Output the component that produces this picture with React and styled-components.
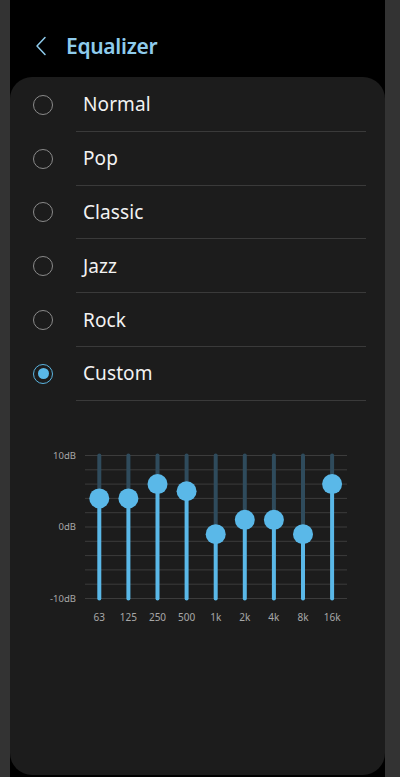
import React from 'react';
import styled, { createGlobalStyle } from 'styled-components';

const Global = createGlobalStyle`
  html, body {
    margin: 0;
    padding: 0;
    background: #333333;
  }
  body {
    font-family: "Noto Sans", "Open Sans", sans-serif;
  }
`;

const Frame = styled.div`
  width: 375px;
  height: 777px;
  margin-left: 10px;
  background: #000;
  display: flex;
  flex-direction: column;
  overflow: hidden;
`;

const Header = styled.div`
  height: 77px;
  display: flex;
  align-items: center;
  padding: 14px 0 0 22px;
  box-sizing: border-box;
  gap: 16px;
`;

const Back = styled.button`
  background: none;
  border: none;
  padding: 0;
  width: 18px;
  height: 22px;
  display: flex;
  align-items: center;
  justify-content: center;
`;

const Title = styled.h1`
  margin: 0;
  font-size: 21px;
  font-weight: 600;
  color: #8ecbec;
  letter-spacing: -0.3px;
`;

const Card = styled.div`
  flex: 1;
  margin-bottom: 2px;
  background: #1c1c1c;
  border-radius: 22px;
`;

const List = styled.div`
  display: flex;
  flex-direction: column;
  padding-top: 1px;
`;

const Row = styled.label`
  height: 53.8px;
  display: flex;
  align-items: center;
  padding-left: 23px;
  cursor: pointer;
`;

const Radio = styled.span`
  width: 20px;
  height: 20px;
  box-sizing: border-box;
  border-radius: 50%;
  border: 1.5px solid ${p => (p.$on ? '#5ab4e0' : '#8a8a8a')};
  display: flex;
  align-items: center;
  justify-content: center;
  flex-shrink: 0;
  &::after {
    content: '';
    width: 11px;
    height: 11px;
    border-radius: 50%;
    background: #5ab8e8;
    display: ${p => (p.$on ? 'block' : 'none')};
  }
`;

const RowBody = styled.div`
  margin-left: 23px;
  margin-right: 19px;
  align-self: stretch;
  flex: 1;
  display: flex;
  align-items: center;
  padding-left: 7px;
  border-bottom: 1px solid #3a3a3a;
  font-size: 19px;
  color: #f2f2f2;
  letter-spacing: 0.1px;
`;

const Chart = styled.div`
  margin-top: 40px;
`;

const presets = ['Normal', 'Pop', 'Classic', 'Jazz', 'Rock', 'Custom'];
const bands = [
  { f: '63', v: 4 },
  { f: '125', v: 4 },
  { f: '250', v: 6 },
  { f: '500', v: 5 },
  { f: '1k', v: -1 },
  { f: '2k', v: 1 },
  { f: '4k', v: 1 },
  { f: '8k', v: -1 },
  { f: '16k', v: 6 },
];

function EqChart() {
  const top = 14.5;
  const step = 7.15;
  const zero = top + 10 * step;
  const bottom = top + 20 * step;
  const x0 = 89.3;
  const dx = 29.1;
  return (
    <svg width="375" height="190" viewBox="0 0 375 190">
      {Array.from({ length: 11 }, (_, i) => (
        <line key={i} x1="75" x2="337" y1={top + i * 2 * step} y2={top + i * 2 * step}
          stroke="#3c3c3c" strokeWidth="1" />
      ))}
      <g fill="#a8a8a8" fontSize="9.5" fontFamily="Noto Sans, sans-serif" textAnchor="end">
        <text x="66" y={top + 3}>10dB</text>
        <text x="66" y={zero + 3}>0dB</text>
        <text x="66" y={bottom + 3}>-10dB</text>
      </g>
      {bands.map((b, i) => {
        const x = x0 + i * dx;
        const y = zero - b.v * step;
        return (
          <g key={b.f}>
            <line x1={x} x2={x} y1={top} y2={y} stroke="#2f4b5c" strokeWidth="4" strokeLinecap="round" />
            <line x1={x} x2={x} y1={y} y2={bottom} stroke="#5ab8e8" strokeWidth="4" strokeLinecap="round" />
            <circle cx={x} cy={y} r="10" fill="#5ab8e8" />
            <text x={x} y={bottom + 22} fill="#a8a8a8" fontSize="10" textAnchor="middle"
              fontFamily="Noto Sans, sans-serif">{b.f}</text>
          </g>
        );
      })}
    </svg>
  );
}

export default function App() {
  const selected = 'Custom';
  return (
    <>
      <Global />
      <Frame>
        <Header>
          <Back aria-label="Back">
            <svg width="12" height="20" viewBox="0 0 12 20">
              <path d="M10 1.5 L2 10 L10 18.5" fill="none" stroke="#8ecbec" strokeWidth="1.5"
                strokeLinecap="round" strokeLinejoin="round" />
            </svg>
          </Back>
          <Title>Equalizer</Title>
        </Header>
        <Card>
          <List>
            {presets.map(p => (
              <Row key={p}>
                <Radio $on={p === selected} />
                <RowBody>{p}</RowBody>
              </Row>
            ))}
          </List>
          <Chart>
            <EqChart />
          </Chart>
        </Card>
      </Frame>
    </>
  );
}
